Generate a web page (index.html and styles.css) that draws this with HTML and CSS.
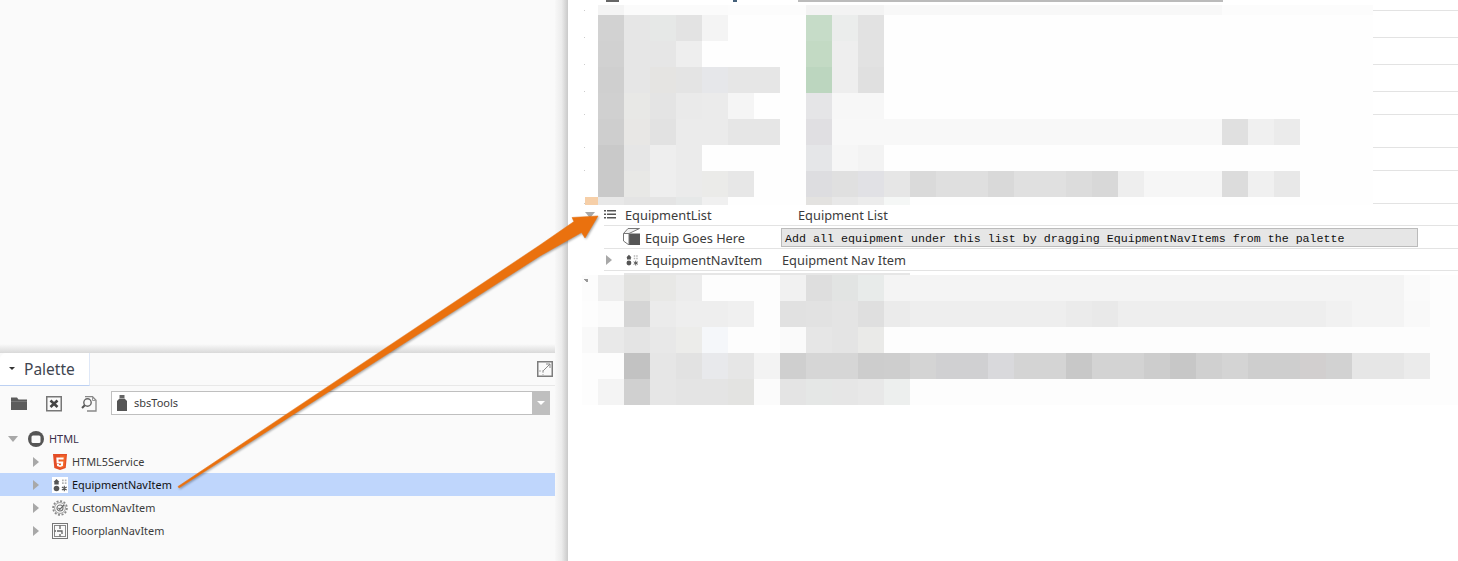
FILE: index.html
```html
<!DOCTYPE html>
<html>
<head>
  <title>Palette</title>
  <link rel="stylesheet" href="styles.css">
</head>
<body>
  <div class="left">
    <div class="blank"></div>
    <div class="palette">
      <div class="tabs">
        <div class="tab"><span class="caret"></span><span>Palette</span></div>
        <svg class="maximize" viewBox="0 0 16 16" fill="none"><rect x=".75" y=".75" width="14.5" height="14.5" stroke="#7d7d7d" stroke-width="1.5"/><path d="M6 10l7-7M9 3h4v4" stroke="#8a8a8a"/><path d="M2 10h6M6 10v4" stroke="#aaa" stroke-dasharray="2 1"/></svg>
      </div>
      <div class="toolbar">
        <svg class="tool" viewBox="0 0 16 16"><path d="M0 1.500h6l1.500 2H16V14H0z" fill="#5c5c5c"/><path d="M0 5h16v1H0z" fill="#777"/></svg>
        <svg class="tool" viewBox="0 0 16 16" fill="none"><rect x=".75" y=".75" width="14.5" height="14" stroke="#777" stroke-width="1.5"/><path d="M4.500 4.500l7 6.500M11.500 4.500l-7 6.500" stroke="#444" stroke-width="2.600"/></svg>
        <svg class="tool" viewBox="0 0 16 16" fill="none"><path d="M4 .7h7.500l3.500 3.500V15H6" stroke="#888" stroke-width="1.300"/><path d="M11.500 1v3.500H15" stroke="#999"/><circle cx="6.500" cy="6.500" r="3.700" stroke="#666" stroke-width="1.400"/><path d="M3.800 9.200L1 12" stroke="#555" stroke-width="2"/></svg>
        <div class="select">
          <svg class="jar" viewBox="0 0 10 16"><path d="M2.500 0h5v3h-5z" fill="#666"/><path d="M2.500 3.500h5L10 6v10H0V6z" fill="#555"/></svg>
          <span class="select-text">sbsTools</span>
          <span class="select-btn"><span></span></span>
        </div>
      </div>
      <div class="tree">
        <div class="tree-row root">
          <span class="tri-down"></span>
          <svg class="ico-root" viewBox="0 0 16 16"><circle cx="8" cy="8" r="8" fill="#555"/><rect x="3.500" y="4.500" width="9" height="7.500" rx="1.500" fill="#fafafa"/></svg>
          <span>HTML</span>
        </div>
        <div class="tree-row">
          <span class="tri-right"></span>
          <svg class="ico" viewBox="0 0 16 16"><path d="M1 0h14l-1.300 14L8 16l-5.700-2z" fill="#e44d26"/><path d="M8 1.200h5.700L12.600 13 8 14.700z" fill="#f16529"/><path d="M4.300 3.500h7.400l-.2 2H6.500l.1 2h4.700l-.4 4.600L8 13l-2.900-.9-.2-2.100h2l.1 1 1 .3 1-.3.1-1.500H4.700z" fill="#fff"/></svg>
          <span>HTML5Service</span>
        </div>
        <div class="tree-row selected">
          <span class="tri-right"></span>
          <svg class="ico nav-bg" viewBox="0 0 16 16"><use href="#nav-icon"/></svg>
          <span>EquipmentNavItem</span>
        </div>
        <div class="tree-row">
          <span class="tri-right"></span>
          <svg class="ico" viewBox="0 0 16 16" fill="none"><circle cx="8" cy="8" r="6.900" stroke="#8a8a8a" stroke-width="1.800" stroke-dasharray="2 1.600"/><circle cx="8" cy="8" r="5.400" stroke="#999"/><circle cx="8" cy="8" r="3" stroke="#777" stroke-width="1.200"/><path d="M6.500 8l1.300 1.300L12 5" stroke="#666" stroke-width="1.200"/></svg>
          <span>CustomNavItem</span>
        </div>
        <div class="tree-row">
          <span class="tri-right"></span>
          <svg class="ico" viewBox="0 0 16 16" fill="none"><rect x=".5" y=".5" width="15" height="15" stroke="#777"/><rect x="2.500" y="2.500" width="11" height="11" stroke="#888"/><path d="M8 2.500V6M5 8h5v3M8 11v2.500M2.500 8H4" stroke="#666" stroke-width="1.300"/></svg>
          <span>FloorplanNavItem</span>
        </div>
      </div>
    </div>
  </div>
  <div class="gutter"></div>

  <div class="right">
    <div class="rows">
      <div class="row h11">
        <span class="clip-icon"></span>
        <span class="clip-dot"></span>
        <span class="clip-field"></span>
      </div>
      <div class="row h27"></div>
      <div class="row h27"></div>
      <div class="row h27"></div>
      <div class="row h23"></div>
      <div class="row h33"></div>
      <div class="row h23"></div>
      <div class="row h33"></div>
      <div class="row h22">
        <span class="tri-down open"></span>
        <svg class="ico-list" viewBox="0 0 12 9"><path d="M0 0h2v1.600H0zM3 0h9v1.600H3zM0 3.500h2v1.600H0zM3 3.500h9v1.600H3zM0 7h2v1.600H0zM3 7h9v1.600H3z" fill="#555"/></svg>
        <span class="name first">EquipmentList</span>
        <span class="label">Equipment List</span>
      </div>
      <div class="row h23 child">
        <svg class="ico-cube" viewBox="0 0 17 17" fill="none"><path d="M6 5.500h11V17H6z" fill="#555"/><path d="M.5 5.500L5 .5h11.500L6 5.500z" fill="#f2f2f2"/><path d="M.5 5.500V13L6 17V5.500H.5zM.5 5.500L5 .5h11.500L6 5.500" stroke="#777"/></svg>
        <span class="name">Equip Goes Here</span>
        <span class="field">Add all equipment under this list by dragging EquipmentNavItems from the palette</span>
      </div>
      <div class="row h22 nav">
        <span class="tri-right"></span>
        <svg class="ico-nav" viewBox="0 0 16 16"><use href="#nav-icon"/></svg>
        <span class="name">EquipmentNavItem</span>
        <span class="label second">Equipment Nav Item</span>
      </div>
    </div>

    <!-- blurred out part of the screenshot -->
    <svg class="mosaic" viewBox="568 0 890 561" shape-rendering="crispEdges">
      <path fill="#fefefe" d="M598 15h775v190H598z"/>
      <path fill="#fdfdfd" d="M582 275h876v130H582z"/>
      <path fill="#ccc" d="M584 10h1v1h-1zM584 37h1v1h-1zM584 64h1v1h-1zM584 91h1v1h-1zM584 114h1v1h-1zM584 147h1v1h-1zM584 170h1v1h-1zM584 203h1v1h-1z"/>
      <path fill="#f4f4f4" d="M598 5h26v10h-26z"/><path fill="#fbfbfb" d="M624 5h104v10H624z"/><path fill="#fcfcfc" d="M728 5h78v10h-78zM1222 5h151v10h-151z"/><path fill="#f3f3f3" d="M806 5h78v10h-78z"/><path fill="#f8f8f8" d="M884 5h338v10H884z"/>

      <path fill="#d2d2d2" d="M598 15h26v26h-26z"/><path fill="#e6e6e6" d="M624 15h26v26h-26z"/><path fill="#e6e8e7" d="M650 15h26v26h-26z"/><path fill="#e3e3e3" d="M676 15h26v26h-26z"/><path fill="#f4f4f4" d="M702 15h26v26h-26z"/><path fill="#c6dcc8" d="M806 15h26v26h-26z"/><path fill="#ebedec" d="M832 15h26v26h-26z"/><path fill="#e2e2e2" d="M858 15h26v26h-26z"/>

      <path fill="#d1d1d1" d="M598 41h26v26h-26z"/><path fill="#e6e6e6" d="M624 41h52v26h-52z"/><path fill="#eee" d="M676 41h26v26h-26z"/><path fill="#c3dac4" d="M806 41h26v26h-26z"/><path fill="#eee" d="M832 41h26v26h-26z"/><path fill="#e2e2e2" d="M858 41h26v26h-26z"/>

      <path fill="#cfcfcf" d="M598 67h26v26h-26z"/><path fill="#e6e6e6" d="M624 67h26v26h-26z"/><path fill="#e5e4e2" d="M650 67h26v26h-26z"/><path fill="#e4e4e4" d="M676 67h26v26h-26z"/><path fill="#e6e7ea" d="M702 67h26v26h-26z"/><path fill="#e6e6e6" d="M728 67h52v26h-52z"/><path fill="#bcd6bf" d="M806 67h26v26h-26z"/><path fill="#eee" d="M832 67h26v26h-26z"/><path fill="#e0e0e0" d="M858 67h26v26h-26z"/>

      <path fill="#d0d0d0" d="M598 93h26v26h-26z"/><path fill="#e8e8e6" d="M624 93h26v26h-26z"/><path fill="#e4e4e4" d="M650 93h26v26h-26z"/><path fill="#eaeaea" d="M676 93h26v26h-26z"/><path fill="#ebebeb" d="M702 93h26v26h-26z"/><path fill="#f5f5f5" d="M728 93h26v26h-26z"/><path fill="#e5e5e7" d="M806 93h26v26h-26z"/><path fill="#f7f7f7" d="M832 93h52v26h-52z"/>

      <path fill="#cecece" d="M598 119h26v26h-26z"/><path fill="#e8e7e5" d="M624 119h26v26h-26z"/><path fill="#e2e2e2" d="M650 119h26v26h-26z"/><path fill="#ebebeb" d="M676 119h52v26h-52z"/><path fill="#e6e6e6" d="M728 119h52v26h-52z"/><path fill="#e0dfe2" d="M806 119h26v26h-26z"/><path fill="#f8f8f8" d="M832 119h390v26H832z"/><path fill="#e0e0e0" d="M1222 119h26v26h-26z"/><path fill="#f0f0f0" d="M1248 119h26v26h-26z"/><path fill="#ebebeb" d="M1274 119h26v26h-26z"/>

      <path fill="#c9c9c9" d="M598 145h26v26h-26z"/><path fill="#e6e6e6" d="M624 145h26v26h-26z"/><path fill="#eee" d="M650 145h26v26h-26z"/><path fill="#ebebeb" d="M676 145h26v26h-26z"/><path fill="#e5e6e8" d="M806 145h26v26h-26z"/><path fill="#f6f6f6" d="M832 145h26v26h-26z"/><path fill="#f3f3f3" d="M858 145h26v26h-26z"/>

      <path fill="#c9c9c9" d="M598 171h26v26h-26z"/><path fill="#e8e8e6" d="M624 171h26v26h-26z"/><path fill="#eee" d="M650 171h26v26h-26z"/><path fill="#ebebeb" d="M676 171h26v26h-26z"/><path fill="#ebebe9" d="M702 171h26v26h-26z"/><path fill="#e7e7e7" d="M728 171h26v26h-26z"/><path fill="#dddde0" d="M806 171h26v26h-26z"/><path fill="#e0e0e0" d="M832 171h26v26h-26z"/><path fill="#e1e1e5" d="M858 171h26v26h-26z"/><path fill="#e6e6e6" d="M884 171h26v26h-26z"/><path fill="#dadada" d="M910 171h26v26h-26z"/><path fill="#dfdfdf" d="M936 171h52v26h-52z"/><path fill="#d9d9d9" d="M988 171h26v26h-26z"/><path fill="#e0e0e0" d="M1014 171h52v26h-52z"/><path fill="#dcdcdc" d="M1066 171h26v26h-26z"/><path fill="#d8d8d8" d="M1092 171h26v26h-26z"/><path fill="#eee" d="M1118 171h26v26h-26z"/><path fill="#f6f6f6" d="M1144 171h78v26h-78z"/><path fill="#dcdcdc" d="M1222 171h26v26h-26z"/><path fill="#f0f0f0" d="M1248 171h26v26h-26z"/><path fill="#e8e8e8" d="M1274 171h26v26h-26z"/>

      <path fill="#f6cfa8" d="M585 197h13v8h-13z"/><path fill="#e8e8e8" d="M598 197h26v8h-26z"/><path fill="#e4e4e4" d="M624 197h52v8h-52z"/><path fill="#e6e8e8" d="M676 197h26v8h-26z"/><path fill="#f0f0f0" d="M702 197h26v8h-26z"/><path fill="#e3e2e0" d="M806 197h26v8h-26z"/><path fill="#e8e8e8" d="M832 197h26v8h-26z"/><path fill="#ececec" d="M858 197h26v8h-26z"/><path fill="#f5f7f6" d="M884 197h26v8h-26z"/>

      <path fill="#e6e6e6" d="M624 273h286v2H624z"/>
      <path fill="#fcfcfc" d="M582 275h16v26h-16z"/><path fill="#eee" d="M598 275h26v26h-26z"/><path fill="#e2e2e0" d="M624 275h26v26h-26z"/><path fill="#e8e8e6" d="M650 275h26v26h-26z"/><path fill="#ececec" d="M676 275h26v26h-26z"/><path fill="#f1f1f1" d="M780 275h26v26h-26z"/><path fill="#dedede" d="M806 275h26v26h-26z"/><path fill="#e2e4e3" d="M832 275h26v26h-26z"/><path fill="#e8ebea" d="M858 275h26v26h-26z"/><path fill="#f4f4f4" d="M884 275h520v26H884z"/><path fill="#fafafa" d="M1404 275h26v26h-26z"/>

      <path fill="#fafafa" d="M598 301h26v26h-26z"/><path fill="#d5d5d5" d="M624 301h26v26h-26z"/><path fill="#ebebeb" d="M650 301h26v26h-26z"/><path fill="#eee" d="M676 301h52v26h-52z"/><path fill="#f0f0f0" d="M728 301h26v26h-26z"/><path fill="#e1e1e1" d="M780 301h26v26h-26z"/><path fill="#e2e2e2" d="M806 301h26v26h-26z"/><path fill="#e4e4e4" d="M832 301h26v26h-26z"/><path fill="#dfdfdf" d="M858 301h26v26h-26z"/><path fill="#ebebeb" d="M884 301h26v26h-26z"/><path fill="#eee" d="M910 301h156v26H910z"/><path fill="#ebebeb" d="M1066 301h26v26h-26z"/><path fill="#e9e9e9" d="M1092 301h26v26h-26z"/><path fill="#eee" d="M1118 301h208v26h-208z"/><path fill="#f1f1f1" d="M1326 301h26v26h-26z"/><path fill="#f4f4f4" d="M1352 301h52v26h-52z"/><path fill="#f9f9f9" d="M1404 301h26v26h-26z"/>

      <path fill="#f9f9f9" d="M582 327h16v26h-16z"/><path fill="#e9e9e9" d="M598 327h26v26h-26z"/><path fill="#e4e4e4" d="M624 327h26v26h-26z"/><path fill="#e8e8e8" d="M650 327h26v26h-26z"/><path fill="#ececea" d="M676 327h26v26h-26z"/><path fill="#f5f7fa" d="M702 327h26v26h-26z"/><path fill="#fafafa" d="M780 327h26v26h-26z"/><path fill="#e6e6e6" d="M806 327h26v26h-26z"/><path fill="#e4e4e4" d="M832 327h26v26h-26z"/><path fill="#eaeae8" d="M858 327h26v26h-26z"/>

      <path fill="#c2c2c2" d="M624 353h26v26h-26z"/><path fill="#e6e6e6" d="M650 353h26v26h-26z"/><path fill="#e2e2e2" d="M676 353h26v26h-26z"/><path fill="#e8e9ec" d="M702 353h26v26h-26z"/><path fill="#e6e6e6" d="M728 353h26v26h-26z"/><path fill="#f3f3f3" d="M754 353h26v26h-26z"/><path fill="#cfcfcf" d="M780 353h26v26h-26z"/><path fill="#d6d6d6" d="M806 353h52v26h-52z"/><path fill="#cdcdcd" d="M858 353h26v26h-26z"/><path fill="#cecece" d="M884 353h26v26h-26z"/><path fill="#d4d4d4" d="M910 353h26v26h-26z"/><path fill="#d0d0d2" d="M936 353h52v26h-52z"/><path fill="#d9d9dc" d="M988 353h26v26h-26z"/><path fill="#d4d4d4" d="M1014 353h52v26h-52z"/><path fill="#c8c8c8" d="M1066 353h26v26h-26z"/><path fill="#d3d3d3" d="M1092 353h52v26h-52z"/><path fill="#cdcdcd" d="M1144 353h26v26h-26z"/><path fill="#c7c7c7" d="M1170 353h26v26h-26z"/><path fill="#d0d0d0" d="M1196 353h26v26h-26z"/><path fill="#d4d4d4" d="M1222 353h26v26h-26z"/><path fill="#cecece" d="M1248 353h52v26h-52z"/><path fill="#d2cfcf" d="M1300 353h26v26h-26z"/><path fill="#d2d2d2" d="M1326 353h26v26h-26z"/><path fill="#e6e6e6" d="M1352 353h52v26h-52z"/><path fill="#ebebeb" d="M1404 353h26v26h-26z"/>

      <path fill="#f4f4f4" d="M598 379h26v26h-26z"/><path fill="#d0d0d0" d="M624 379h26v26h-26z"/><path fill="#e6e6e6" d="M650 379h26v26h-26z"/><path fill="#e4e4e4" d="M676 379h52v26h-52z"/><path fill="#e3e3e1" d="M728 379h26v26h-26z"/><path fill="#fbfbfb" d="M754 379h26v26h-26z"/><path fill="#e4e4e4" d="M780 379h26v26h-26z"/><path fill="#e5e7e6" d="M806 379h26v26h-26z"/><path fill="#e6e6e6" d="M832 379h26v26h-26z"/><path fill="#e8e8e8" d="M858 379h26v26h-26z"/><path fill="#edefee" d="M884 379h26v26h-26z"/>
      <path fill="#999" d="M584 279h4v4l-1-1h-1v-1h-1z"/>
    </svg>
  </div>

  <svg class="hidden-defs" width="0" height="0">
    <symbol id="nav-icon" viewBox="0 0 16 16">
      <path d="M4.500 2L7.500 5H6.700v2.500H2.300V5H1.500z" fill="#555"/>
      <path d="M10 2.500h1.700v1.700H10zM12.800 2.500h1.700v1.700h-1.700zM10 5.300h1.700V7H10zM12.800 5.300h1.700V7h-1.700z" fill="#b5b5b5"/>
      <circle cx="4.500" cy="11.500" r="2.800" fill="#555"/>
      <path d="M12.300 8.700v5.600M9.900 10.100l4.800 2.800M14.700 10.100l-4.800 2.800" stroke="#555" stroke-width="1.100"/>
    </symbol>
  </svg>

  <svg class="arrow" viewBox="0 0 1458 561">
    <polygon points="178,486.500 540,245 574,221.500 572,217.500 598,216 585,238 581.500,232.500 540,256 179,488" fill="#ea710e" stroke="#ea710e" stroke-width=".5" stroke-linejoin="round"/>
  </svg>
</body>
</html>
```

FILE: styles.css
```css
* { box-sizing: border-box; }

body {
  margin: 0;
  width: 1458px;
  height: 561px;
  overflow: hidden;
  position: relative;
  display: flex;
  font-family: "Noto Sans", "Open Sans", sans-serif;
  color: #3c3c3c;
  background-color: #fff;
}

/* Left pane */
.left { width: 555px; display: flex; flex-direction: column; background-color: #fafafa; }
.blank { flex: 1; background: linear-gradient(to bottom, #fafafa calc(100% - 9px), #d9d9d9); }
.gutter { width: 13px; background: linear-gradient(to right, #f8f8f8, #ececec 50%, #c9c9c9); }

.palette { height: 208px; }
.tabs {
  height: 33px;
  display: flex;
  justify-content: space-between;
  align-items: center;
  border-bottom: 1px solid #e8e8e8;
  padding-right: 2px;
}
.tab {
  width: 90px;
  height: 33px;
  padding-left: 9px;
  display: flex;
  align-items: center;
  gap: 9px;
  font-size: 15.5px;
  color: #3f4550;
  background-color: #fff;
  border-radius: 6px 0 0 0;
  border-bottom: 1px solid #bcd0f2;
  border-right: 1px solid #dfe8f7;
}
.caret { width: 0; height: 0; border: 3px solid transparent; border-top: 3px solid #333; border-bottom: 0; }
.maximize { width: 16px; height: 16px; }

.toolbar { height: 41px; padding: 5px 5px 0 11px; display: flex; align-items: flex-start; }
.tool { width: 16px; height: 16px; margin: 5px 19px 0 0; }
.tool:nth-child(3) { margin-right: 14px; }
.select {
  flex: 1;
  height: 24px;
  display: flex;
  align-items: center;
  background-color: #fff;
  border: 1px solid #bfbfbf;
  padding-left: 5px;
}
.jar { width: 10px; height: 16px; }
.select-text { flex: 1; margin-left: 7px; padding-bottom: 2px; font-size: 11px; }
.select-btn { width: 17px; height: 22px; background-color: #bfbfbf; display: flex; align-items: center; justify-content: center; }
.select-btn span { border: 4px solid transparent; border-top: 4px solid #fff; border-bottom: 0; width: 0; height: 0; }

.tree-row {
  height: 23px;
  padding-left: 33px;
  display: flex;
  align-items: center;
  font-size: 10.9px;
  color: #3c3c3c;
}
.tree-row.root { padding-left: 8px; color: #3b2f4a; }
.tree-row.selected { background-color: #bfd6fc; color: #111; }
.tri-right { width: 0; height: 0; border-left: 6px solid #a8a8a8; border-top: 5.5px solid transparent; border-bottom: 5.5px solid transparent; }
.tri-down { width: 0; height: 0; border-top: 6px solid #a8a8a8; border-left: 5.5px solid transparent; border-right: 5.5px solid transparent; }
.tri-down.open { margin-left: -19px; margin-right: 8px; }
.ico { width: 16px; height: 16px; margin: 0 4px 0 13px; }
.ico-root { width: 16px; height: 16px; margin: 0 5px 0 10px; }
.nav-bg { background-color: #fff; }

/* Right pane */
.right { flex: 1; position: relative; background-color: #fff; }
.rows { margin-left: 36px; }
.row {
  display: flex;
  align-items: center;
  border-bottom: 1px solid #e3e3e3;
  font-size: 12.8px;
  color: #3c3c3c;
}
.h11 { height: 11px; align-items: flex-start; }
.h22 { height: 22px; }
.h23 { height: 23px; }
.h27 { height: 27px; }
.h33 { height: 33px; }

.clip-icon { width: 13px; height: 2px; margin-left: 2px; background-color: #666; }
.clip-dot { width: 4px; height: 2px; margin-left: 114px; background-color: #44607a; }
.clip-field { width: 425px; height: 2px; margin-left: 61px; background-color: #bbb; }

.ico-list { width: 12px; height: 9px; margin-left: 1px; }
.ico-cube { width: 17px; height: 17px; margin: 0 0 1px 19px; }
.ico-nav { width: 14px; height: 14px; margin-left: 13px; }
.nav { padding-left: 2px; }

.name { margin-left: 5px; width: 136px; padding-top: 1px; }
.label { padding-top: 1px; }
.name.first { margin-left: 9px; width: 173px; }
.nav .name { margin-left: 6px; width: 137px; }

.field {
  width: 637px;
  height: 19px;
  padding: 1px 0 0 3px;
  line-height: 18px;
  font-family: "Liberation Mono", monospace;
  font-size: 11.67px;
  color: #111;
  background-color: #e6e6e6;
  border: 1px solid #bbb;
  white-space: nowrap;
}

.mosaic { position: absolute; left: 0; top: 0; width: 890px; height: 561px; }
.hidden-defs { position: absolute; }

/* Annotation drawn over the whole screenshot */
.arrow {
  position: absolute;
  left: 0;
  top: 0;
  width: 1458px;
  height: 561px;
  filter: drop-shadow(1px 1px 1px rgba(0, 0, 0, .35));
  pointer-events: none;
}
```
